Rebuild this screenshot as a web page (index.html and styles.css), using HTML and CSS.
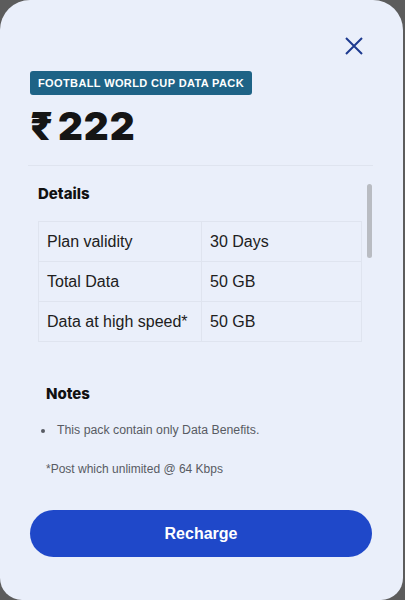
FILE: index.html
```html
<!DOCTYPE html>
<html>
<head>
<meta charset="utf-8">
<link rel="stylesheet" href="styles.css">
</head>
<body>
<div class="sheet">
  <div class="close-row">
    <svg class="close" width="18" height="18" viewBox="0 0 18 18"><path d="M1 1 L17 17 M17 1 L1 17" stroke="#1d3a8f" stroke-width="2" fill="none"/></svg>
  </div>
  <div class="head">
    <span class="badge">FOOTBALL WORLD CUP DATA PACK</span>
    <div class="price"><span class="rupee">₹</span>222</div>
  </div>
  <div class="divider"></div>
  <div class="scroll">
    <div class="thumb"></div>
    <h2 class="title">Details</h2>
    <table class="details">
      <tr><td>Plan validity</td><td>30 Days</td></tr>
      <tr><td>Total Data</td><td>50 GB</td></tr>
      <tr><td>Data at high speed*</td><td>50 GB</td></tr>
    </table>
    <div class="notes">
      <h2 class="title">Notes</h2>
      <ul class="note-list">
        <li>This pack contain only Data Benefits.</li>
      </ul>
      <p class="foot">*Post which unlimited @ 64 Kbps</p>
    </div>
  </div>
  <div class="actions">
    <button class="recharge">Recharge</button>
  </div>
</div>
</body>
</html>
```
FILE: styles.css
```css
html, body { margin: 0; padding: 0; }
body {
  background: #5c5c5c;
  width: 405px;
  height: 600px;
  overflow: hidden;
  font-family: "Liberation Sans", Arial, sans-serif;
}
.sheet {
  width: 403px;
  height: 600px;
  background: #eaeffa;
  border-radius: 30px 30px 22px 22px;
  display: flex;
  flex-direction: column;
  box-sizing: border-box;
  position: relative;
}
.close-row {
  display: flex;
  justify-content: flex-end;
  padding: 37px 40px 0 0;
  height: 18px;
}
.head {
  padding: 16px 30px 0 30px;
}
.badge {
  display: inline-block;
  background: #1e6386;
  color: #fff;
  font-weight: bold;
  font-size: 11px;
  letter-spacing: 0.38px;
  padding: 6px 8px 5px 8px;
  border-radius: 3px;
  line-height: 13px;
}
.price {
  font-family: Inter, "Noto Sans", sans-serif;
  font-weight: 900;
  font-size: 38.5px;
  line-height: 44px;
  color: #151515;
  margin-top: 9px;
  letter-spacing: 1px;
}
.rupee {
  margin-right: 4px;
}
.divider {
  height: 1px;
  background: #dfe4ef;
  margin: 17px 30px 0 28px;
}
.scroll {
  position: relative;
  padding: 18px 40px 0 38px;
  height: 344px;
  overflow: hidden;
  box-sizing: border-box;
}
.thumb {
  position: absolute;
  right: 31px;
  top: 18px;
  width: 5px;
  height: 74px;
  border-radius: 3px;
  background: #b9bcc2;
}
.title {
  margin: 0;
  font-family: Inter, sans-serif;
  font-weight: 800;
  font-size: 15px;
  line-height: 20px;
  color: #111;
}
.details {
  margin-top: 17px;
  width: 324px;
  border-collapse: collapse;
  font-size: 16px;
  color: #202020;
}
.details td {
  border: 1px solid #dfe4ef;
  height: 39px;
  padding: 0 8px;
  white-space: nowrap;
}
.details td:first-child { width: 146px; }
.notes {
  padding: 42px 0 0 8px;
}
.note-list {
  margin: 19px 0 0 0;
  padding-left: 9px;
  font-size: 12.3px;
  color: #585b63;
}
.note-list li { padding-left: 2px; }
.foot {
  margin: 25px 0 0 0;
  font-size: 12px;
  color: #585b63;
}
.actions {
  padding: 0 31px 0 30px;
}
.recharge {
  width: 100%;
  height: 47px;
  border: none;
  border-radius: 24px;
  background: #1f48c9;
  color: #fff;
  font-family: "Liberation Sans", Arial, sans-serif;
  font-weight: bold;
  font-size: 16px;
}
```
